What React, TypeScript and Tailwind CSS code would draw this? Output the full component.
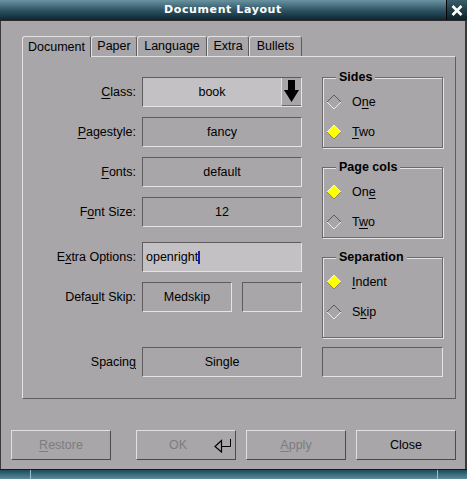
import React from "react";

function Field({ children, className = "" }: { children?: React.ReactNode; className?: string }) {
  return (
    <div
      className={
        "h-[30px] flex items-center justify-center border border-t-[#5e5c5e] border-l-[#5e5c5e] border-b-[#e4e4e4] border-r-[#e4e4e4] " +
        className
      }
    >
      {children}
    </div>
  );
}

function Row({ label, children, className = "" }: { label: React.ReactNode; children: React.ReactNode; className?: string }) {
  return (
    <div className={"flex items-center " + className}>
      <div className="w-[113px] text-right whitespace-nowrap">{label}</div>
      <div className="ml-[6px] flex">{children}</div>
    </div>
  );
}

function Diamond({ on }: { on: boolean }) {
  return (
    <svg width="16" height="16" viewBox="0 0 16 16">
      {on ? (
        <>
          <polygon points="8,1 15,8 8,15 1,8" fill="#ffff00" />
          <polyline points="1,8 8,1 15,8" fill="none" stroke="#f4f4d0" strokeWidth="1" />
          <polyline points="1,8 8,15 15,8" fill="none" stroke="#8a8a6a" strokeWidth="1" />
        </>
      ) : (
        <>
          <polyline points="1,8 8,1 15,8" fill="none" stroke="#5a585a" strokeWidth="1" />
          <polyline points="1,8 8,15 15,8" fill="none" stroke="#ececec" strokeWidth="1" />
        </>
      )}
    </svg>
  );
}

function Radio({ on, children }: { on: boolean; children: React.ReactNode }) {
  return (
    <div className="h-[30px] flex items-center pl-[3px]">
      <Diamond on={on} />
      <span className="ml-[10px]">{children}</span>
    </div>
  );
}

function Group({ title, children, className = "" }: { title: string; children: React.ReactNode; className?: string }) {
  return (
    <div
      className={
        "relative w-[121px] border border-[#6b696b] shadow-[inset_1px_1px_0_#e4e4e4,1px_1px_0_#e4e4e4] " + className
      }
    >
      <div className="absolute top-[-9px] left-[13px] px-[3px] bg-[#a8a6a8] font-bold leading-[16px]">{title}</div>
      {children}
    </div>
  );
}

function Button({
  children,
  className = "",
}: {
  children: React.ReactNode;
  className?: string;
}) {
  return (
    <div
      className={
        "w-[100px] h-[30px] flex items-center border border-t-[#e0e0e0] border-l-[#e0e0e0] border-b-[#4c4a4c] border-r-[#4c4a4c] " +
        className
      }
    >
      {children}
    </div>
  );
}

export default function App() {
  return (
    <div className="w-[467px] h-[479px] flex flex-col overflow-hidden bg-[#a8a6a8] text-black text-[12.5px] font-['Liberation_Sans',Arial,sans-serif]">
      {/* Title bar */}
      <div className="h-[21px] flex border-b border-[#2a2a2a]">
        <div className="flex-1 flex items-center justify-center bg-linear-to-b from-[#6a93a1] via-[#2f5665] to-[#0f2631] text-white font-bold text-[11px] tracking-[0.6px] font-['DejaVu_Sans',sans-serif]">
          Document Layout
        </div>
        <div className="w-[21px] flex items-center justify-center border-l border-[#050505] bg-linear-to-b from-[#3a5d6a] to-[#0d1f28]">
          <svg width="12" height="11" viewBox="0 0 12 11">
            <path d="M1.5 1 L10.5 10 M10.5 1 L1.5 10" stroke="#ffffff" strokeWidth="2.6" />
          </svg>
        </div>
      </div>

      {/* Body */}
      <div className="flex-1 flex flex-col border-l border-[#3a3a3a] border-r-2 border-r-[#3a3a3a]">
        <div className="ml-[21px] mt-[15px] w-[434px]">
          {/* Tabs */}
          <div className="flex items-start h-[20px]">
            <div className="relative z-10 w-[69px] h-[21px] -mb-px flex items-center justify-center bg-[#a8a6a8] border-l border-t border-r border-l-[#e2e2e2] border-t-[#e2e2e2] border-r-[#5e5c5e] rounded-t-[3px]">
              Document
            </div>
            <div className="w-[46px] h-[20px] flex items-center justify-center border-l border-t border-r border-l-[#e2e2e2] border-t-[#e2e2e2] border-r-[#5e5c5e] rounded-t-[3px]">
              Paper
            </div>
            <div className="w-[70px] h-[20px] flex items-center justify-center border-l border-t border-r border-l-[#e2e2e2] border-t-[#e2e2e2] border-r-[#5e5c5e] rounded-t-[3px]">
              Language
            </div>
            <div className="w-[42px] h-[20px] flex items-center justify-center border-l border-t border-r border-l-[#e2e2e2] border-t-[#e2e2e2] border-r-[#5e5c5e] rounded-t-[3px]">
              Extra
            </div>
            <div className="w-[53px] h-[20px] flex items-center justify-center border-l border-t border-r border-l-[#e2e2e2] border-t-[#e2e2e2] border-r-[#5e5c5e] rounded-t-[3px]">
              Bullets
            </div>
          </div>

          {/* Panel */}
          <div className="w-[434px] h-[343px] flex pt-[20px] border border-t-[#e2e2e2] border-l-[#e2e2e2] border-r-[#5e5c5e] border-b-[#5e5c5e]">
            {/* Left column */}
            <div className="flex flex-col">
              <Row label={<><u className="underline-offset-2">C</u>lass:</>}>
                <div className="w-[160px] h-[30px] flex border border-t-[#5e5c5e] border-l-[#5e5c5e] border-b-[#e4e4e4] border-r-[#e4e4e4]">
                  <div className="flex-1 flex items-center justify-center bg-[#c3c1c3]">book</div>
                  <div className="w-[20px] flex items-start justify-center border-l border-[#e2e2e2] border-b border-b-[#6a686a]">
                    <svg width="17" height="26" viewBox="0 0 17 26">
                      <path d="M5 2 H12 V12 H16 L8.5 24 L1 12 H5 Z" fill="#000" />
                    </svg>
                  </div>
                </div>
              </Row>
              <Row className="mt-[10px]" label={<><u className="underline-offset-2">P</u>agestyle:</>}>
                <Field className="w-[160px]">fancy</Field>
              </Row>
              <Row className="mt-[10px]" label={<><u className="underline-offset-2">F</u>onts:</>}>
                <Field className="w-[160px]">default</Field>
              </Row>
              <Row className="mt-[10px]" label={<>F<u className="underline-offset-2">o</u>nt Size:</>}>
                <Field className="w-[160px]">12</Field>
              </Row>
              <Row className="mt-[15px]" label={<>E<u className="underline-offset-2">x</u>tra Options:</>}>
                <Field className="w-[160px] !justify-start bg-[#c3c1c3] pl-[3px]">
                  <span>openright</span>
                  <span className="w-[2px] h-[13px] bg-[#1a1ab4]" />
                </Field>
              </Row>
              <Row className="mt-[10px]" label={<>Defa<u className="underline-offset-2">u</u>lt Skip:</>}>
                <Field className="w-[90px]">Medskip</Field>
                <Field className="w-[60px] ml-[10px]" />
              </Row>
              <Row className="mt-[35px]" label={<>Spacin<u className="underline-offset-2">g</u></>}>
                <Field className="w-[160px]">Single</Field>
              </Row>
            </div>

            {/* Right column */}
            <div className="ml-[20px] flex flex-col">
              <Group title="Sides" className="h-[71px] pt-[9px]">
                <Radio on={false}>
                  O<u className="underline-offset-2">n</u>e
                </Radio>
                <Radio on={true}>
                  <u className="underline-offset-2">T</u>wo
                </Radio>
              </Group>
              <Group title="Page cols" className="h-[71px] pt-[9px] mt-[19px]">
                <Radio on={true}>
                  On<u className="underline-offset-2">e</u>
                </Radio>
                <Radio on={false}>
                  T<u className="underline-offset-2">w</u>o
                </Radio>
              </Group>
              <Group title="Separation" className="h-[81px] pt-[9px] mt-[19px]">
                <Radio on={true}>
                  <u className="underline-offset-2">I</u>ndent
                </Radio>
                <Radio on={false}>
                  S<u className="underline-offset-2">k</u>ip
                </Radio>
              </Group>
              <Field className="w-[121px] mt-[9px]" />
            </div>
          </div>
        </div>

        {/* Buttons */}
        <div className="flex ml-[10px] mt-[31px]">
          <Button className="justify-center text-[#7e7c7e]">
            <span>
              <u className="underline-offset-2">R</u>estore
            </span>
          </Button>
          <Button className="ml-[25px] text-[#7e7c7e] pl-[32px]">
            <span>OK</span>
            <svg className="ml-[27px]" width="19" height="15" viewBox="0 0 19 15">
              <path d="M7.5 2.5 L1 8.5 L7.5 14 Z" fill="none" stroke="#000" strokeWidth="1.2" />
              <path d="M7.5 8.5 H16.5 V1" fill="none" stroke="#000" strokeWidth="1" />
            </svg>
          </Button>
          <Button className="ml-[10px] justify-center text-[#7e7c7e]">
            <span>
              <u className="underline-offset-2">A</u>pply
            </span>
          </Button>
          <Button className="ml-[10px] justify-center">
            <span>Close</span>
          </Button>
        </div>
      </div>

      {/* Bottom frame */}
      <div className="h-[10px] flex border-t border-[#1a1a1a] bg-linear-to-b from-[#1e4a5b] to-[#5a8c9c]">
        <div className="w-[30px]" />
        <div className="w-px bg-[#9cc0cc]" />
        <div className="flex-1" />
        <div className="w-px bg-[#9cc0cc]" />
        <div className="w-[29px]" />
      </div>
    </div>
  );
}
